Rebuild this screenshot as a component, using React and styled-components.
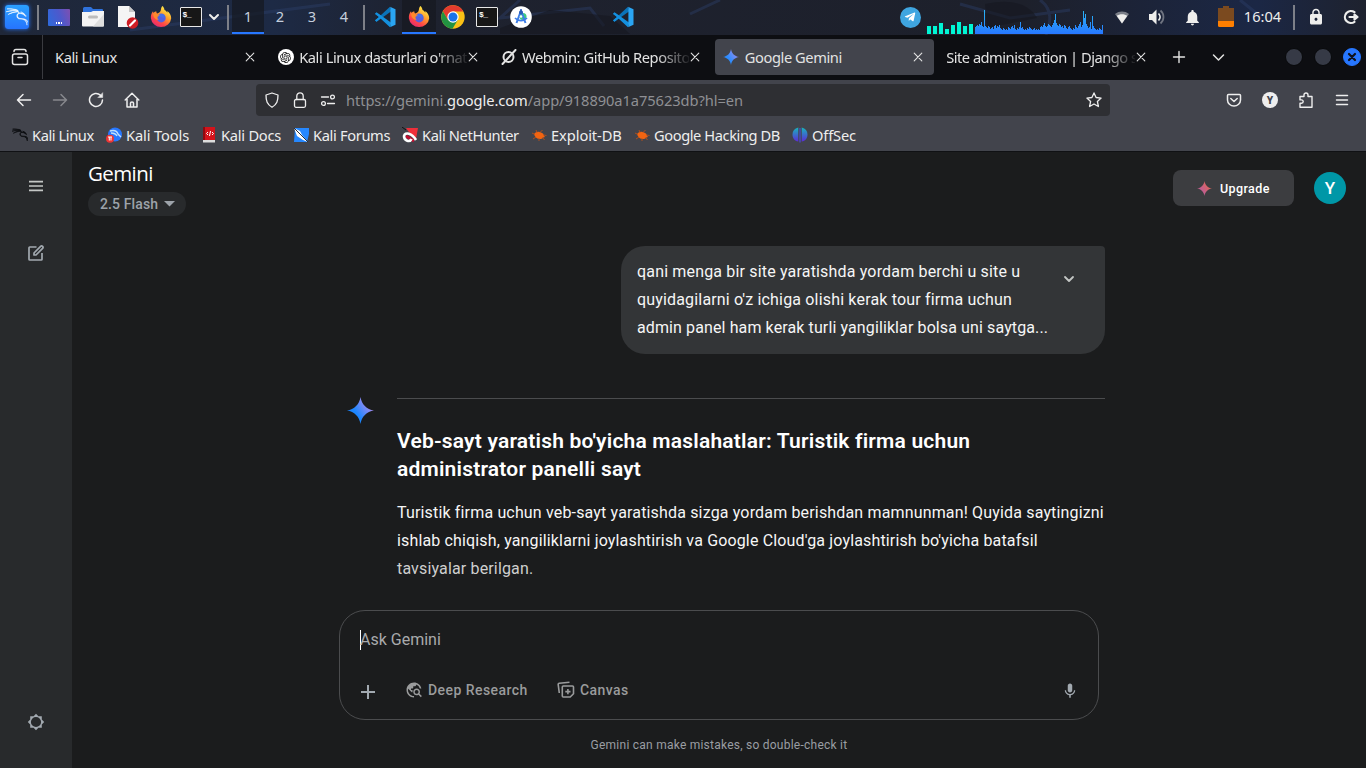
import React from "react";
import styled, { createGlobalStyle } from "styled-components";
import { SiKalilinux } from "react-icons/si";
import { RiOpenaiFill } from "react-icons/ri";
import { MdMic, MdTravelExplore, MdNotifications, MdLock } from "react-icons/md";
import { FaTelegramPlane } from "react-icons/fa";

const GlobalStyle = createGlobalStyle`
  * { box-sizing: border-box; }
  html, body, #root { margin: 0; height: 100%; }
  body { width: 1366px; height: 768px; overflow: hidden; background: #1b1c1d; }
  svg { display: block; flex: none; }
`;

const Desktop = styled.div`
  display: flex;
  flex-direction: column;
  width: 1366px;
  height: 768px;
  overflow: hidden;
  font-family: "Noto Sans", sans-serif;
`;

/* ---------- Desktop panel ---------- */
const Panel = styled.header`
  position: relative;
  z-index: 0;
  display: flex;
  align-items: flex-start;
  flex: none;
  height: 35px;
  background: #1f222d;
`;
const Wallpaper = styled.svg`
  position: absolute;
  inset: 0;
  z-index: -1;
`;
const Slot = styled.div`
  display: flex;
  align-items: center;
  justify-content: center;
  flex: none;
  width: ${(p) => p.$w || 34}px;
  height: 34px;
  margin-left: ${(p) => p.$ml || 0}px;
  color: #eeeeec;
  background: ${(p) => (p.$active ? "rgba(22,24,32,.7)" : "transparent")};
  box-shadow: ${(p) => (p.$active ? "inset 0 -2px #2777ff" : "none")};
  font-size: 14.67px;
`;
const Separator = styled.div`
  flex: none;
  width: 2px;
  height: 25px;
  margin: 5px ${(p) => p.$mr ?? 3}px 0 ${(p) => p.$ml ?? 3}px;
  background: #7d8088;
`;
const Workspace = styled(Slot)`
  width: 32px;
  padding-bottom: 2px;
  color: #c5cfdd;
`;
const Clock = styled(Slot)`
  padding-bottom: 2px;
`;
const KaliTile = styled.div`
  display: flex;
  align-items: center;
  justify-content: center;
  width: 24px;
  height: 24px;
  border-radius: 3px;
  background: linear-gradient(#2aa0ff, #2674ff);
  box-shadow: 0 0 4px #2674ff;
  path { stroke: #fff; stroke-width: 0.5px; }
`;
const TerminalTile = styled.div`
  width: 22px;
  height: 20px;
  padding: 2px 0 0 2px;
  border: 1px solid #e8e8e8;
  border-radius: 1px;
  background: #171717;
  color: #fff;
  font: bold 8px/9px "Liberation Mono", monospace;
  letter-spacing: -0.6px;
`;
const DesktopTile = styled.div`
  display: flex;
  align-items: flex-end;
  justify-content: center;
  gap: 1px;
  width: 22px;
  height: 17px;
  padding-bottom: 2px;
  border-radius: 1px;
  background: linear-gradient(70deg, #2d6bdd, #4d59cc 55%, #7f4fb0);
`;
const Dot = styled.i`
  width: 1.5px;
  height: 1.5px;
  background: #fff;
`;
const TelegramDisc = styled.div`
  display: flex;
  align-items: center;
  justify-content: center;
  width: 21px;
  height: 21px;
  border-radius: 50%;
  background: #3fa5e0;
  color: #fff;
`;

/* ---------- Browser ---------- */
const TabBar = styled.nav`
  display: flex;
  align-items: center;
  flex: none;
  height: 45px;
  padding-bottom: 1px;
  background: #0d0e12;
  color: #e3e3e3;
`;
const FirefoxView = styled.div`
  display: flex;
  align-items: center;
  justify-content: center;
  width: 43px;
  height: 44px;
  margin-right: 4px;
  padding-right: 3px;
  border-right: 1px solid #3a3b40;
`;
const Tab = styled.div`
  display: flex;
  align-items: center;
  flex: none;
  width: 218.8px;
  height: 36px;
  margin-right: 4px;
  padding: 0 10px 0 8px;
  border-radius: 4px;
  background: ${(p) => (p.$active ? "#42444c" : "transparent")};
`;
const TabTitle = styled.span`
  flex: 1;
  min-width: 0;
  margin-left: ${(p) => (p.$icon ? 5.4 : 0)}px;
  overflow: hidden;
  white-space: nowrap;
  font-size: 14.67px;
  letter-spacing: ${(p) => p.$ls}px;
  mask-image: ${(p) => (p.$fade ? "linear-gradient(90deg,#000 calc(100% - 32px),rgba(0,0,0,.08))" : "none")};
`;
const BarButton = styled.div`
  display: flex;
  align-items: center;
  justify-content: center;
  flex: none;
  width: ${(p) => p.$w || 36}px;
  height: 36px;
  opacity: ${(p) => (p.$dim ? 0.4 : 1)};
`;
const WindowControls = styled.div`
  display: flex;
  gap: 11px;
  margin: 0 5px 0 auto;
`;
const WindowDot = styled.div`
  display: flex;
  align-items: center;
  justify-content: center;
  width: 18px;
  height: 18px;
  border: 1px solid ${(p) => (p.$close ? "#2777ff" : "#08090b")};
  border-radius: 50%;
  background: ${(p) => (p.$close ? "#2777ff" : "#363a46")};
`;
const Toolbar = styled.div`
  display: flex;
  align-items: center;
  flex: none;
  height: 40px;
  padding: 0 6px;
  background: #42444c;
  color: #eeeeee;
`;
const AddressBar = styled.div`
  display: flex;
  align-items: center;
  width: 854px;
  height: 32px;
  margin: 0 106px 0 106px;
  padding: 0 2px;
  border-radius: 4px;
  background: #2e2f33;
`;
const Url = styled.span`
  flex: 1;
  margin-left: 4px;
  color: #8f9094;
  font-size: 14.67px;
  letter-spacing: -0.07px;
  b { color: #eeeeee; font-weight: 400; }
`;
const AccountDot = styled.div`
  width: 16px;
  height: 16px;
  border-radius: 50%;
  background: #eee;
  color: #42444c;
  text-align: center;
  font: 800 10px/16px "Noto Sans", sans-serif;
`;
const Bookmarks = styled.div`
  display: flex;
  align-items: center;
  flex: none;
  height: 32px;
  padding: 0 0 1px 12px;
  border-bottom: 1px solid #101114;
  background: #42444c;
  color: #eeeeee;
`;
const Bookmark = styled.div`
  display: flex;
  align-items: center;
  gap: 4px;
  margin-right: 12px;
  font-size: 14.67px;
  line-height: 20px;
  white-space: nowrap;
`;
const BookmarkName = styled.span`
  width: ${(p) => p.$w}px;
  letter-spacing: ${(p) => p.$ls}px;
`;
const KaliMark = styled(SiKalilinux)`
  color: #0c0d10;
  path { stroke: #0c0d10; stroke-width: 1px; }
`;

/* ---------- Gemini ---------- */
const Page = styled.div`
  display: flex;
  flex: 1;
  background: #1b1c1d;
  color: #fff;
  font-family: Roboto, sans-serif;
`;
const Sidebar = styled.aside`
  display: flex;
  flex-direction: column;
  align-items: center;
  width: 72px;
  padding: 26px 0 37px;
  background: #282a2c;
  color: #a2a9b0;
`;
const SideSpacer = styled.div`
  height: ${(p) => p.$h}px;
  flex: ${(p) => (p.$grow ? 1 : "none")};
`;
const Main = styled.main`
  display: flex;
  flex-direction: column;
  flex: 1;
`;
const TopBar = styled.div`
  display: flex;
  height: 72px;
  padding: 9px 20px 0 16px;
`;
const Brand = styled.div`
  flex: 1;
`;
const BrandName = styled.div`
  height: 24px;
  margin-bottom: 7px;
  font: 400 20.5px/24px "Open Sans", sans-serif;
  letter-spacing: -0.6px;
`;
const ModelChip = styled.div`
  display: flex;
  align-items: center;
  gap: 6px;
  width: 98px;
  height: 24px;
  padding-left: 12px;
  border-radius: 12px;
  background: #282a2c;
  color: #9da3aa;
  font-size: 14px;
  font-weight: 500;
  letter-spacing: 0.12px;
`;
const Upgrade = styled.div`
  display: flex;
  align-items: center;
  gap: 8px;
  width: 121px;
  height: 36px;
  margin: 9px 20px 0 0;
  padding-left: 24px;
  border-radius: 8px;
  background: #3c3d40;
  font-size: 12.5px;
  font-weight: 500;
  letter-spacing: 0.4px;
`;
const Avatar = styled.div`
  width: 32px;
  height: 32px;
  margin-top: 11px;
  border-radius: 50%;
  background: #0097a7;
  text-align: center;
  font: 500 17px/33px Roboto, sans-serif;
`;
const Conversation = styled.section`
  display: flex;
  flex-direction: column;
  width: 760px;
  height: 386px;
  margin-left: 267px;
  padding-top: 22px;
`;
const Prompt = styled.div`
  display: flex;
  justify-content: space-between;
  align-self: flex-end;
  width: 484px;
  height: 108px;
  margin-right: -6px;
  padding: 12px 30px 0 16px;
  border-radius: 24px 4px 24px 24px;
  background: #333537;
`;
const Chevron = styled.div`
  padding-top: 15px;
  color: #c4c7c5;
`;
const Line = styled.div`
  width: max-content;
  height: 28px;
  white-space: nowrap;
  font-size: 16px;
  line-height: 28px;
  letter-spacing: ${(p) => p.$ls || 0.16}px;
  color: ${(p) => (p.$faded ? "#cfcfcf" : "#f6f6f6")};
`;
const Reply = styled.div`
  display: flex;
  gap: 22px;
  margin: 42px -6px 0 8px;
`;
const ReplyBody = styled.article`
  flex: 1;
  margin-top: 2px;
  border-top: 1px solid #4b4c4e;
`;
const Heading = styled.div`
  padding: 28px 0 16px;
`;
const HeadingLine = styled(Line)`
  font-size: 21px;
  font-weight: 600;
  letter-spacing: 0.2px;
  color: #fff;
`;
const Composer = styled.section`
  width: 760px;
  height: 110px;
  margin-left: 267px;
  padding: 19px 20px 0;
  border: 1px solid #4b4c4e;
  border-radius: 26px;
`;
const Placeholder = styled.div`
  height: 20px;
  border-left: 1px solid #fff;
  color: #a9aaac;
  font-size: 16px;
  line-height: 20px;
  text-indent: -1px;
`;
const Tools = styled.div`
  display: flex;
  align-items: center;
  height: 24px;
  margin-top: 28px;
  color: #9a9b9c;
  font-size: 14px;
  font-weight: 500;
`;
const Tool = styled.div`
  display: flex;
  align-items: center;
  gap: 5px;
  width: ${(p) => p.$w}px;
  letter-spacing: 0.45px;
`;
const PlusButton = styled.div`
  width: 45px;
  padding-top: 3px;
  color: #a2a9b0;
`;
const MicButton = styled.div`
  margin: 2px -1px 0 auto;
  color: #a2a9b0;
`;
const Disclaimer = styled.div`
  width: 760px;
  margin: 16px 0 0 267px;
  color: #9a9ea3;
  text-align: center;
  font-size: 12px;
  line-height: 18px;
  letter-spacing: 0.24px;
`;

/* ---------- Icons ---------- */
const Stroke = ({ size = 16, w = 1.3, children, box = 16 }) => (
  <svg width={size} height={size} viewBox={`0 0 ${box} ${box}`} fill="none" stroke="currentColor" strokeWidth={w} strokeLinecap="round" strokeLinejoin="round">
    {children}
  </svg>
);
const Close = () => <Stroke size={12} box={12} w={1.1}><path d="M2.200 2.200l7.600 7.600M9.800 2.200l-7.600 7.600" /></Stroke>;
const ChevronDown = ({ size = 12, w = 1.6 }) => <Stroke size={size} box={12} w={w}><path d="M2 4l4 4 4-4" /></Stroke>;
const Spark = ({ size, from, to, id }) => (
  <svg width={size} height={size} viewBox="0 0 28 28">
    <defs>
      <linearGradient id={id} x1="4" y1="20" x2="22" y2="7" gradientUnits="userSpaceOnUse">
        <stop offset=".3" stopColor={from} /><stop offset="1" stopColor={to} />
      </linearGradient>
    </defs>
    <path fill={`url(#${id})`} d="M14 0C15 7.500 20.500 13 28 14 20.500 15 15 20.500 14 28 13 20.500 7.500 15 0 14 7.500 13 13 7.500 14 0z" />
  </svg>
);
const Firefox = ({ id }) => (
  <svg width="22" height="22" viewBox="0 0 22 22">
    <defs>
      <linearGradient id={id} x1="17" y1="2" x2="5" y2="20" gradientUnits="userSpaceOnUse">
        <stop offset="0" stopColor="#fff04a" /><stop offset=".4" stopColor="#ff9a2b" /><stop offset=".72" stopColor="#ff4647" /><stop offset="1" stopColor="#e52a72" />
      </linearGradient>
    </defs>
    <path fill={`url(#${id})`} d="M12.500 0c1 .8 1.800 2.300 2 4 1.500.7 2.300 1.700 2.800 2.700.2-.5 0-1.200-.2-1.700 2.300 1.300 4.100 4 4.100 7.200A10.200 9.800 0 0 1 .9 12.300C.7 9.500 1.400 6.900 3 5.200l.5 1.900C4.300 6 5.300 5.600 6.400 5.600 6.300 6.700 6.700 7.300 7.200 7.600 10 7 11 4.500 11 3c.3-1.300.7-2.400 1.500-3z" />
    <circle cx="11.200" cy="11.900" r="4.500" fill="#5560df" />
    <path fill="#ff8a2a" d="M3.200 7.400c2.500-.4 3.400.8 5.200.9 1.200.1 1.900.5 1.300 1.100-.7.7-1.900.6-2.200 1.700-.2 1 .3 2 1.200 2.700-3.400.2-5.600-2.500-5.500-6.400z" />
    <path fill="#3d7bf0" d="M8.200 9.900c1-1.800 4-2.400 5.700-1.200 1 .8 1 2.300.2 3.300z" opacity=".6" />
  </svg>
);
const Vscode = () => (
  <svg width="22" height="22" viewBox="0 0 22 22">
    <path fill="#0b73b9" d="M1 8l1.500-1.300 4 2.900L16 .7l1.300 4.600L2.500 15.800 1 14.500 5 11z" />
    <path fill="#1490df" d="M1 14.300l1.500 1.400 4-3.100L16 21.300l1.300-4.600L2.500 6.300 1 7.700 5 11z" />
    <path fill="#2aa5f3" d="M16 .7l5.500 2.500v15.600L16 21.300c.4-.3.4-.6.400-1.300V2c0-.7 0-1-.4-1.300z" />
  </svg>
);
const Chrome = () => (
  <svg width="24" height="24" viewBox="0 0 24 24">
    <circle cx="12" cy="12" r="11.700" fill="#fbc116" />
    <path fill="#e33b2e" d="M1.870 6.150A11.700 11.700 0 0 1 22.300 6.500H12L7 14.900z" />
    <path fill="#229342" d="M1.870 6.150A11.700 11.700 0 0 0 11.500 23.700L16.900 14.800 12 16 7 14.900z" />
    <circle cx="12" cy="12" r="5.700" fill="#fff" /><circle cx="12" cy="12" r="4.500" fill="#1a73e8" />
  </svg>
);
const AndroidStudio = () => (
  <svg width="22" height="22" viewBox="0 0 22 22">
    <circle cx="11" cy="11" r="10.800" fill="#fff" />
    <circle cx="13" cy="10.500" r="3.500" fill="#3ecb84" />
    <g fill="none" stroke="#3c7de8" strokeWidth="2"><path d="M11 4.500L6.500 17M11 4.500L15.500 17" /><path d="M5 12c3 3.500 9 3.500 12 0" strokeWidth="1.600" /></g>
    <circle cx="11" cy="6.500" r="2" fill="#285bb5" /><circle cx="11" cy="10.500" r="1.300" fill="#fff" />
    <path d="M11 3v3" stroke="#285bb5" strokeWidth="1.500" />
  </svg>
);
const Folder = () => (
  <svg width="22" height="20" viewBox="0 0 22 20">
    <path fill="#2f72dc" d="M1 1.500Q1 0 2.500 0H9l2 2h9q1 0 1 1v5H1z" />
    <path fill="#f4f4f4" d="M0 5h9l2-1h11v14.500q0 1-1 1H1q-1 0-1-1z" />
    <path fill="#dedede" d="M22 7v11.500q0 1-1 1H11z" /><rect x="6" y="8.500" width="10" height="3" rx="1.500" fill="#bcbcbc" />
  </svg>
);
const BlockedDoc = () => (
  <svg width="22" height="24" viewBox="0 0 22 24">
    <path fill="#f5f5f5" d="M1 1h11l6 6v15H1z" /><path fill="#c8c8c8" d="M12 1l6 6h-6z" />
    <circle cx="15.500" cy="18" r="5.800" fill="#cf1d24" /><path d="M13 20.500l5-5" stroke="#fff" strokeWidth="2.200" strokeLinecap="round" />
  </svg>
);
const cores = [8, 8, 11, 5, 9, 12, 8, 10];
const load = [7, 8, 9, 8, 10, 9, 12, 8, 7, 24, 8, 7, 6, 8, 7, 5, 6, 7, 5, 8, 9, 6, 8, 7, 9, 6, 5, 4, 6, 5, 4, 5, 4, 7, 6, 5, 7, 8, 6, 9, 5, 4, 6, 5, 7, 12, 6, 7, 5, 4, 5, 4, 6, 5, 7, 6, 5, 4, 5, 6, 4, 5, 4, 5, 4, 7, 8, 7, 9, 11, 8, 7, 8, 10, 9, 8, 7, 9, 11, 14, 20, 11, 9, 8, 10, 9, 7, 8, 6, 9, 8, 6, 5, 7, 8, 6, 5, 4, 6, 5, 9, 7, 6, 8, 10, 12, 7, 9, 23, 16, 20, 10, 8, 6, 7, 12, 5, 18, 8, 6, 5, 4, 5, 4, 6, 5, 4, 9];
const Monitor = () => (
  <svg width="178" height="34" viewBox="0 0 178 34" shapeRendering="crispEdges">
    <defs><linearGradient id="load" x1="0" y1="10" x2="0" y2="34" gradientUnits="userSpaceOnUse"><stop offset="0" stopColor="#2ab7f5" /><stop offset="1" stopColor="#2777ff" /></linearGradient></defs>
    {cores.map((h, i) => <rect key={i} x={i * 6} y={34 - h} width="4" height={h} fill="#00f5d4" />)}
    <path fill="url(#load)" d={`M48 34${load.map((h) => `V${34 - h}h1`).join("")}V34z`} />
  </svg>
);
const Wifi = () => <svg width="16" height="16" viewBox="0 0 16 16" fill="currentColor"><path d="M1 5C5 1.700 11 1.700 15 5L8 14.500z" opacity=".45" /><path d="M2.700 6.700C5.500 4.600 10.500 4.600 13.300 6.700L8 14.500z" /></svg>;
const Volume = () => (
  <svg width="18" height="18" viewBox="0 0 18 18" fill="none" stroke="currentColor" strokeWidth="1.700">
    <path d="M1 6h3l4.500-4.500v15L4 12H1z" fill="currentColor" stroke="none" /><path d="M10.500 5.500c2 2 2 5 0 7" /><path d="M12.500 2.500c4 3.500 4 9.500 0 13" opacity=".4" />
  </svg>
);
const Battery = () => <svg width="16" height="22" viewBox="0 0 16 22"><path fill="#7b4a1f" d="M5 0h6v2h5v13H0V2h5z" /><path fill="#ff7f00" d="M0 15h16v4.500q0 1.500-1.500 1.500h-13Q0 21 0 19.500z" /></svg>;
const Logout = () => <Stroke size={16} w={2.2}><path d="M11.500 3.200a6 6 0 1 0 0 9.600" /><path d="M6.500 8h7M11.500 5.500L14.500 8l-3 2.500z" fill="currentColor" /></Stroke>;
const Webmin = () => <Stroke w={2}><circle cx="7.500" cy="8" r="5" /><path d="M1.500 15L14.500 1" /></Stroke>;
const DocsMark = () => <svg width="16" height="16" viewBox="0 0 16 16"><path fill="#d3131b" d="M2 0h12v13H2z" /><path fill="#8d0b10" d="M2 0h2v13H2z" /><path fill="#ddd" d="M2 13h12v2.500H2z" /><path d="M7 5L5.500 6.500 7 8m4-3l1.500 1.500L11 8M9.500 4l-1 5" stroke="#fff" fill="none" /></svg>;
const ToolsMark = () => <svg width="16" height="16" viewBox="0 0 16 16"><circle cx="9" cy="7.500" r="7" fill="#2777ff" /><path d="M4 4c4-1 7 0 8 3l3 3M5 6c3 0 5 1 6 3" stroke="#bfe0ff" strokeWidth="1.400" fill="none" /><circle cx="4" cy="11.700" r="4" fill="#ed3434" /><path d="M2 10h4M3.300 10v3.500M5 10v3.500" stroke="#fff" /></svg>;
const ForumsMark = () => <svg width="16" height="16" viewBox="0 0 16 16"><path fill="#2688ff" d="M2 1h14v6l-2 8H1z" /><path d="M1 1l6 3 2 4 6 7-5-2-6-4z" fill="#fff" /><path d="M1 1l14 14" stroke="#26303c" /></svg>;
const NetMark = () => <svg width="16" height="16" viewBox="0 0 16 16"><path fill="#ee2f3a" d="M4 1h12l-2 11-8-8z" /><path d="M4 9l8 5" stroke="#c20f30" strokeWidth="3" /><path d="M14 13C10 6 3 4.500 2 9 2 14 8 15.500 9.500 12" fill="none" stroke="#fff" strokeWidth="2.600" /><path d="M0 0l4 3" stroke="#111" /></svg>;
const BugMark = () => <svg width="16" height="16" viewBox="0 0 16 16"><path fill="#f26411" d="M3 7.500C4 4.500 8 3.800 10.500 5.800 12 6.300 12.600 7.300 12.900 8.500L14 10l-1.700.4C10.500 12.800 6 12.300 4.500 10z" /><path d="M1 6l3 1.500M5 3l1 2.500M9 5.500L11.500 3M5 10l-3 2M8 11.500v2.500M11.500 10.500l2 2.500M12.500 8l3 .5" stroke="#b9501a" strokeWidth=".9" /></svg>;
const OffsecMark = () => <svg width="16" height="16" viewBox="0 0 16 16"><defs><linearGradient id="off" x2="0" y2="1"><stop stopColor="#17b5bd" /><stop offset="1" stopColor="#5b2bd8" /></linearGradient></defs><path fill="url(#off)" d="M6.300.5v14C2.500 14 .5 11 .5 7.500S2.500 1.500 6.300.5zm3.400 0v14c3.800-.5 5.800-3.500 5.800-7S13.500 1.500 9.700.5z" /><path d="M8 1v14.500" stroke="#4b4bd8" strokeWidth="1.200" /></svg>;
const CanvasIcon = () => (
  <svg width="18" height="18" viewBox="0 0 18 18" fill="none" stroke="currentColor" strokeWidth="1.600" strokeLinejoin="round">
    <path d="M12.500 1.300L2.300 2.300Q1 2.500 1.200 3.700L2.300 12" /><path d="M6.300 5h9.200q1 0 1 1v6.700l-3.300 3.300H6.300q-1 0-1-1V6q0-1 1-1zM10.900 8v5.200M8.300 10.600h5.200" />
  </svg>
);
const PencilSquare = () => (
  <Stroke size={18} box={18} w={1.7}><path d="M9.500 3H2.800q-.8 0-.8.8v11.400q0 .8.800.8h11.400q.8 0 .8-.8V9" strokeLinecap="butt" /><path d="M7 9L13.600 2.400q1-1 2 0t0 2L9 11H7z" /></Stroke>
);
const SettingsGear = () => (
  <svg width="18" height="18" viewBox="0 0 18 18">
    <path fill="currentColor" fillRule="evenodd" d="M9 .8L11.400 3.200H14.800V6.600L17.200 9 14.800 11.400V14.800H11.400L9 17.200 6.600 14.800H3.200V11.400L.8 9 3.200 6.600V3.200H6.600zM9 3.900A5.100 5.100 0 1 0 9 14.100 5.100 5.100 0 1 0 9 3.900z" />
  </svg>
);

const OpenaiDisc = styled.div`
  display: flex;
  align-items: center;
  justify-content: center;
  width: 16px;
  height: 16px;
  border-radius: 50%;
  background: #fff;
  color: #111;
`;
const ReplySpark = styled.div`
  width: 28px;
  height: 28px;
  padding-top: 0.5px;
`;

const tabs = [
  { title: "Kali Linux", ls: -0.42 },
  { title: "Kali Linux dasturlari o'rnat", icon: <OpenaiDisc><RiOpenaiFill size={13} /></OpenaiDisc>, fade: true, ls: -0.44 },
  { title: "Webmin: GitHub Reposito", icon: <Webmin />, fade: true, ls: -0.42 },
  { title: "Google Gemini", icon: <Spark size={16} id="tabSpark" from="#2b8cff" to="#8a8cf0" />, active: true, ls: -0.42 },
  { title: "Site administration | Django s", fade: true, ls: -0.5 },
];
const bookmarks = [
  ["Kali Linux", <KaliMark size={16} />, 62, -0.42],
  ["Kali Tools", <ToolsMark />, 63, -0.12],
  ["Kali Docs", <DocsMark />, 60, -0.25],
  ["Kali Forums", <ForumsMark />, 77, -0.35],
  ["Kali NetHunter", <NetMark />, 97, -0.37],
  ["Exploit-DB", <BugMark />, 71, -0.08],
  ["Google Hacking DB", <BugMark />, 126, -0.42],
  ["OffSec", <OffsecMark />, 44, -0.15],
];

const DesktopPanel = () => (
  <Panel>
    <Wallpaper width="1366" height="35">
      <defs>
        <linearGradient id="wall"><stop stopColor="#1f2738" /><stop offset=".2" stopColor="#1d2a45" /><stop offset=".3" stopColor="#1e222f" /><stop offset=".75" stopColor="#1d202b" /><stop offset=".92" stopColor="#1b2745" /><stop offset="1" stopColor="#1e222e" /></linearGradient>
      </defs>
      <rect width="1366" height="35" fill="url(#wall)" />
      <path d="M130 30L330 4M520 0l-20 18 90-10 14 18M690 14l30-14M1040 0c14 10 10 24 6 35M960 4l50 14 60-8M1240 0l20 16" stroke="#2c3f68" strokeWidth="3" fill="none" opacity=".45" />
      <path d="M500 28l50-18 60 6 20 18H500zM985 4q40-8 52 14l-50 10z" fill="#15171f" opacity=".6" />
    </Wallpaper>
    <Slot><KaliTile><SiKalilinux size={22} color="#fff" /></KaliTile></Slot>
    <Separator />
    <Slot><DesktopTile><Dot /><Dot /><Dot /></DesktopTile></Slot>
    <Slot><Folder /></Slot>
    <Slot $w={35}><BlockedDoc /></Slot>
    <Slot $w={32}><Firefox id="ff1" /></Slot>
    <Slot $w={27}><TerminalTile>$_</TerminalTile></Slot>
    <Slot $w={20}><ChevronDown w={2} /></Slot>
    <Separator />
    <Workspace $active>1</Workspace>
    <Workspace>2</Workspace>
    <Workspace>3</Workspace>
    <Workspace>4</Workspace>
    <Separator />
    <Slot><Vscode /></Slot>
    <Slot $active><Firefox id="ff2" /></Slot>
    <Slot><Chrome /></Slot>
    <Slot><TerminalTile>$_</TerminalTile></Slot>
    <Slot><AndroidStudio /></Slot>
    <Slot $ml={68}><Vscode /></Slot>
    <Slot $ml={253}><TelegramDisc><FaTelegramPlane size={12} /></TelegramDisc></Slot>
    <Monitor />
    <Slot><Wifi /></Slot>
    <Slot $w={36}><Volume /></Slot>
    <Slot $w={34}><MdNotifications size={19} /></Slot>
    <Slot $w={34}><Battery /></Slot>
    <Clock $w={39}>16:04</Clock>
    <Separator $ml={11} />
    <Slot $w={36}><MdLock size={18} /></Slot>
    <Slot $w={33}><Logout /></Slot>
  </Panel>
);

const Browser = () => (
  <>
    <TabBar>
      <FirefoxView><Stroke size={18} box={18} w={1.5}><rect x="1.500" y="6" width="15" height="10.500" rx="2" /><path d="M3 3.500Q3 1.500 5 1.500h8q2 0 2 2M7 9.500h4" /></Stroke></FirefoxView>
      {tabs.map((t) => (
        <Tab key={t.title} $active={t.active}>
          {t.icon}
          <TabTitle $icon={!!t.icon} $fade={t.fade} $ls={t.ls}>{t.title}</TabTitle>
          <Close />
        </Tab>
      ))}
      <BarButton $w={36}><Stroke w={1.400}><path d="M2.500 8h11M8 2.500v11" /></Stroke></BarButton>
      <BarButton $w={43}><ChevronDown size={15} w={1.200} /></BarButton>
      <WindowControls>
        <WindowDot /><WindowDot />
        <WindowDot $close><Stroke size={10} box={10} w={2.200}><path d="M2 2l6 6M8 2L2 8" stroke="#10131c" /></Stroke></WindowDot>
      </WindowControls>
    </TabBar>
    <Toolbar>
      <BarButton><Stroke w={1.500}><path d="M1.500 8h13M7 2.500L1.500 8 7 13.500" /></Stroke></BarButton>
      <BarButton $dim><Stroke w={1.500}><path d="M14.500 8h-13M9 2.500L14.500 8 9 13.500" /></Stroke></BarButton>
      <BarButton><Stroke w={1.500}><path d="M12.500 3.200A6.500 6.500 0 1 0 14.500 8" /><path d="M14.700 1v4.500h-4.500z" fill="currentColor" strokeWidth=".5" /></Stroke></BarButton>
      <BarButton $w={36}><Stroke w={1.500}><path d="M1.200 8L8 1.300 14.800 8M3 7v8h10V7M6.500 15v-4q0-1 1.500-1t1.500 1v4" /></Stroke></BarButton>
      <AddressBar>
        <BarButton $w={28}><Stroke><path d="M8 1l6 2c0 6-1 9.500-6 12.300C3 12.500 2 9 2 3z" /></Stroke></BarButton>
        <BarButton $w={28}><Stroke><rect x="2.500" y="7.500" width="11" height="7.800" rx="1.500" /><path d="M4.800 7.500V4a3.200 3.200 0 0 1 6.400 0v3.500" /></Stroke></BarButton>
        <BarButton $w={28}><Stroke><path d="M1.500 5h7M7.500 11.500h7" /><circle cx="12.500" cy="5" r="1.900" /><circle cx="3.500" cy="11.500" r="1.900" /></Stroke></BarButton>
        <Url>https://gemini.<b>google.com</b>/app/918890a1a75623db?hl=en</Url>
        <BarButton $w={28}><Stroke><path d="M8 .9l2.100 4.600 5 .6-3.700 3.400 1 5L8 12l-4.400 2.500 1-5L.9 6.100l5-.6z" /></Stroke></BarButton>
      </AddressBar>
      <BarButton><Stroke w={1.500}><path d="M1.500 3.500q0-1 1-1h11q1 0 1 1V8a6.500 6 0 0 1-13 0zM4.800 6.500L8 9.500l3.200-3" /></Stroke></BarButton>
      <BarButton><AccountDot>Y</AccountDot></BarButton>
      <BarButton><Stroke w={1.400}><path d="M2 4.500h4V3a2 2 0 0 1 4 0v1.500h4v10.800H2v-4h1.500a1.700 1.700 0 0 0 0-3.400H2z" /></Stroke></BarButton>
      <BarButton><Stroke w={1.500}><path d="M2.500 3.500h11M2.500 8h11M2.500 12.500h11" /></Stroke></BarButton>
    </Toolbar>
    <Bookmarks>
      {bookmarks.map(([name, icon, w, ls]) => (
        <Bookmark key={name}>{icon}<BookmarkName $w={w} $ls={ls}>{name}</BookmarkName></Bookmark>
      ))}
    </Bookmarks>
  </>
);

const Gemini = () => (
  <Page>
    <Sidebar>
      <Stroke w={1.700}><path d="M1 3.700h14M1 8h14M1 12.300h14" stroke="#c4c7c5" strokeLinecap="butt" /></Stroke>
      <SideSpacer $h={50} />
      <PencilSquare />
      <SideSpacer $grow />
      <SettingsGear />
    </Sidebar>
    <Main>
      <TopBar>
        <Brand>
          <BrandName>Gemini</BrandName>
          <ModelChip>2.5 Flash<svg width="11" height="6"><path d="M0 0h11L5.500 5.500z" fill="currentColor" /></svg></ModelChip>
        </Brand>
        <Upgrade><Spark size={15} id="upSpark" from="#c15f8c" to="#e0655a" />Upgrade</Upgrade>
        <Avatar>Y</Avatar>
      </TopBar>
      <Conversation>
        <Prompt>
          <div>
            <Line $ls={0.17}>qani menga bir site yaratishda yordam berchi u site u</Line>
            <Line $ls={0.17}>quyidagilarni o'z ichiga olishi kerak tour firma uchun</Line>
            <Line $ls={0.11}>admin panel ham kerak turli yangiliklar bolsa uni saytga...</Line>
          </div>
          <Chevron><ChevronDown w={1.800} /></Chevron>
        </Prompt>
        <Reply>
          <ReplySpark><Spark size={27} id="replySpark" from="#1c86ff" to="#a08bf0" /></ReplySpark>
          <ReplyBody>
            <Heading>
              <HeadingLine>Veb-sayt yaratish bo'yicha maslahatlar: Turistik firma uchun</HeadingLine>
              <HeadingLine>administrator panelli sayt</HeadingLine>
            </Heading>
            <Line $ls={0.16}>Turistik firma uchun veb-sayt yaratishda sizga yordam berishdan mamnunman! Quyida saytingizni</Line>
            <Line $ls={0.15}>ishlab chiqish, yangiliklarni joylashtirish va Google Cloud'ga joylashtirish bo'yicha batafsil</Line>
            <Line $ls={0.15} $faded>tavsiyalar berilgan.</Line>
          </ReplyBody>
        </Reply>
      </Conversation>
      <Composer>
        <Placeholder>Ask Gemini</Placeholder>
        <Tools>
          <PlusButton><Stroke w={2}><path d="M1 8h14M8 1v14" strokeLinecap="butt" /></Stroke></PlusButton>
          <Tool $w={152}><MdTravelExplore size={18} />Deep Research</Tool>
          <Tool $w={120}><CanvasIcon />Canvas</Tool>
          <MicButton><MdMic size={18} /></MicButton>
        </Tools>
      </Composer>
      <Disclaimer>Gemini can make mistakes, so double-check it</Disclaimer>
    </Main>
  </Page>
);

export default function App() {
  return (
    <>
      <GlobalStyle />
      <Desktop>
        <DesktopPanel />
        <Browser />
        <Gemini />
      </Desktop>
    </>
  );
}
